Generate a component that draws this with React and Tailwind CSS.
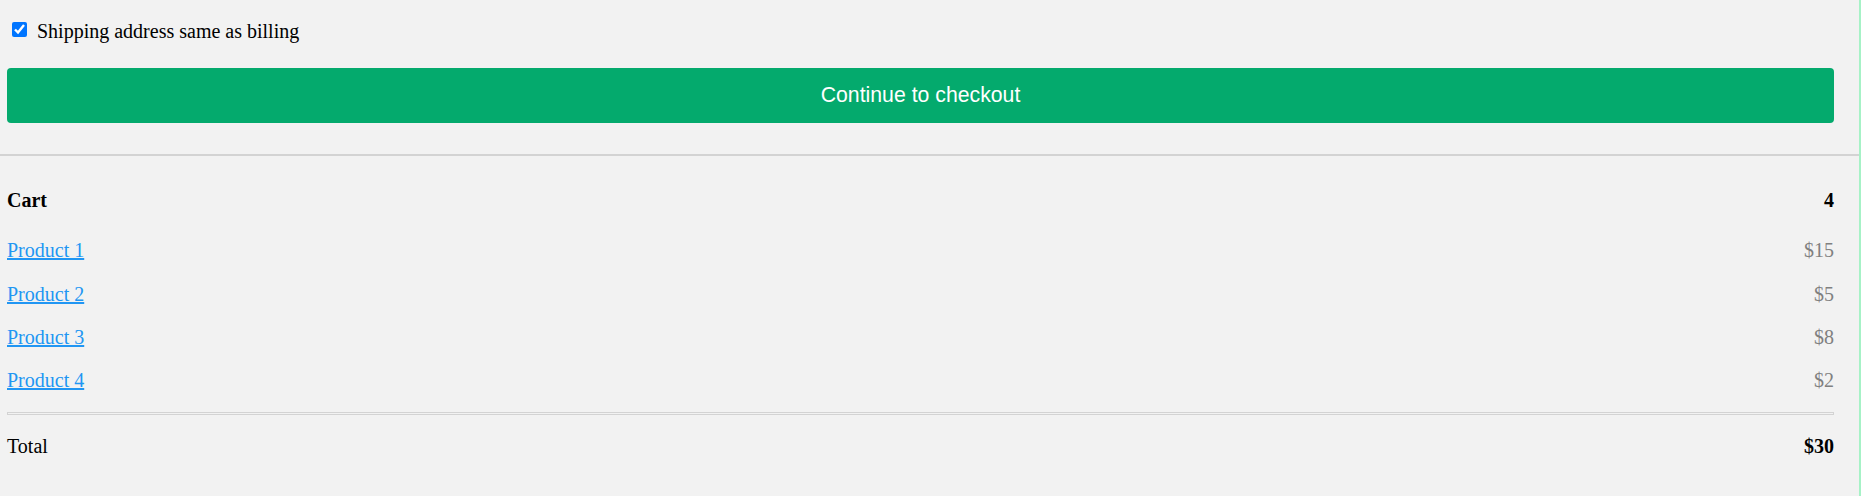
import React from 'react';

const PRODUCTS = [
    { name: 'Product 1', price: '$15' },
    { name: 'Product 2', price: '$5' },
    { name: 'Product 3', price: '$8' },
    { name: 'Product 4', price: '$2' },
];

const App = () => {
    return (
        <div className="flex min-h-[496px] bg-[#f2f2f2] text-black font-['Liberation_Serif','Times_New_Roman',serif] text-[20px] leading-[23.33px]">
            <div className="flex-1 min-w-0">
                {/* Checkout form tail */}
                <div className="pl-[7px] pr-[25px] pt-[20px] pb-[31px] border-b-2 border-[#d3d3d3]">
                    <label className="flex items-start">
                        <input
                            type="checkbox"
                            defaultChecked
                            className="w-[15px] h-[15px] mt-[2px] ml-[5px] mr-[10px] shrink-0"
                        />
                        <span>Shipping address same as billing</span>
                    </label>
                    <button className="mt-[25px] w-full h-[55px] rounded-[4px] bg-[#04aa6d] text-white text-[21.25px] font-['Liberation_Sans',Arial,sans-serif] flex items-center justify-center">
                        Continue to checkout
                    </button>
                </div>

                {/* Cart */}
                <div className="pl-[7px] pr-[25px] pt-[33px] pb-[20px]">
                    <div className="flex justify-between font-bold">
                        <span>Cart</span>
                        <span>4</span>
                    </div>
                    <div className="mt-[26.67px] flex flex-col gap-[20px]">
                        {PRODUCTS.map(p => (
                            <div key={p.name} className="flex justify-between">
                                <a href="#" className="text-[#2196f3] underline">{p.name}</a>
                                <span className="text-[#808080]">{p.price}</span>
                            </div>
                        ))}
                    </div>
                    <div className="mt-[19px] h-[3px] border border-[#d3d3d3]" />
                    <div className="mt-[20px] flex justify-between">
                        <span>Total</span>
                        <span className="font-bold">$30</span>
                    </div>
                </div>
            </div>
            <div className="w-[2px] shrink-0 bg-[#a6f2c6]" />
        </div>
    );
};

export default App;
